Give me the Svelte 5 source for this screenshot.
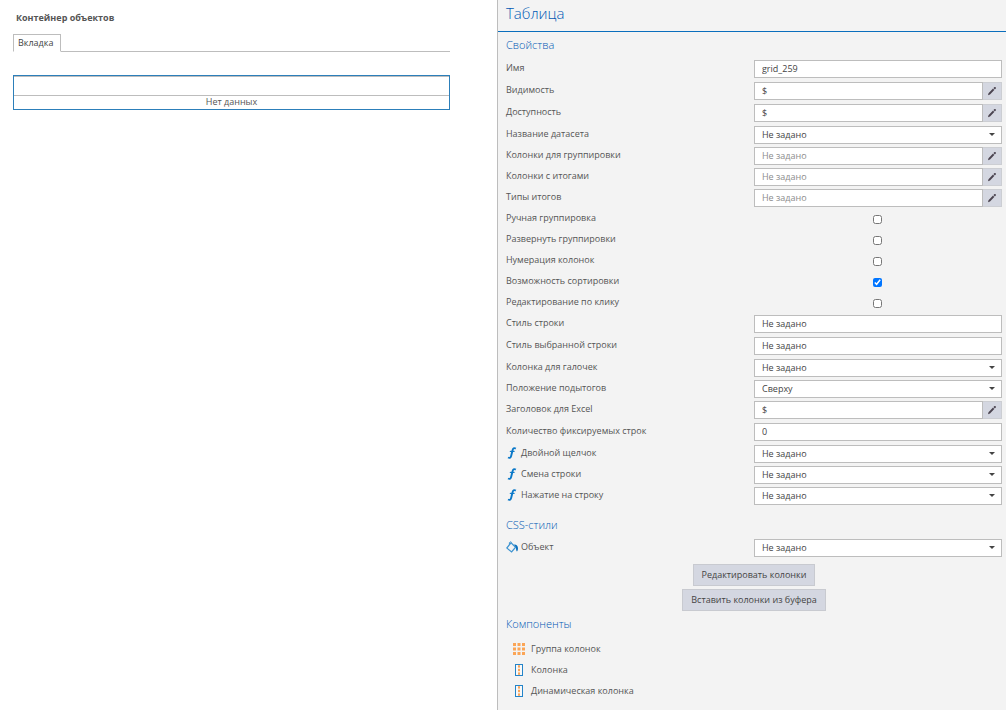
<script>
	// свойства выбранной таблицы
	// type определяет, какой элемент управления рисуется в строке
	let props = [
		{ id: 'name', label: 'Имя', type: 'text', value: 'grid_259' },
		{ id: 'visible', label: 'Видимость', type: 'edit', value: '$' },
		{ id: 'enabled', label: 'Доступность', type: 'edit', value: '$' },
		{ id: 'dataset', label: 'Название датасета', type: 'select', value: 'Не задано' },
		{ id: 'groups', label: 'Колонки для группировки', type: 'pick', value: '' },
		{ id: 'totals', label: 'Колонки с итогами', type: 'pick', value: '' },
		{ id: 'totalTypes', label: 'Типы итогов', type: 'pick', value: '' },
		{ id: 'manual', label: 'Ручная группировка', type: 'check', value: false },
		{ id: 'expand', label: 'Развернуть группировки', type: 'check', value: false },
		{ id: 'numbers', label: 'Нумерация колонок', type: 'check', value: false },
		{ id: 'sort', label: 'Возможность сортировки', type: 'check', value: true },
		{ id: 'clickEdit', label: 'Редактирование по клику', type: 'check', value: false },
		{ id: 'rowStyle', label: 'Стиль строки', type: 'text', value: 'Не задано' },
		{ id: 'selStyle', label: 'Стиль выбранной строки', type: 'text', value: 'Не задано' },
		{ id: 'checkCol', label: 'Колонка для галочек', type: 'select', value: 'Не задано' },
		{ id: 'subtotals', label: 'Положение подытогов', type: 'select', value: 'Сверху' },
		{ id: 'excel', label: 'Заголовок для Excel', type: 'edit', value: '$' },
		{ id: 'fixed', label: 'Количество фиксируемых строк', type: 'text', value: '0' },
		{ id: 'dblclick', label: 'Двойной щелчок', type: 'select', value: 'Не задано', icon: 'func' },
		{ id: 'rowChange', label: 'Смена строки', type: 'select', value: 'Не задано', icon: 'func' },
		{ id: 'rowClick', label: 'Нажатие на строку', type: 'select', value: 'Не задано', icon: 'func' }
	];

	let styles = [
		{ id: 'object', label: 'Объект', type: 'select', value: 'Не задано', icon: 'fill' }
	];

	let components = [
		{ label: 'Группа колонок', icon: 'grid' },
		{ label: 'Колонка', icon: 'column' },
		{ label: 'Динамическая колонка', icon: 'column' }
	];

	const dots = [0, 1, 2];
</script>

<!-- строка свойства: подпись слева, поле справа -->
{#snippet row(p)}
	<div class="row {p.type}">
		<label for={p.id}>
			{#if p.icon === 'func'}
				<svg class="icon" width="12" height="12" viewBox="0 0 12 12">
					<path d="M9.8 1.6C8 .5 7 1.3 6.5 3.5L5.2 8.8C4.8 10.7 3.8 11.4 2 10.5" fill="none" stroke="#0a78c8" stroke-width="1.9" />
					<path d="M3.8 4.4h4.8" stroke="#0a78c8" stroke-width="1.1" />
				</svg>
			{:else if p.icon === 'fill'}
				<svg class="icon" width="12" height="12" viewBox="0 0 12 12">
					<path d="M5 1.8L9.6 6.2 5.6 11 .8 7z" fill="none" stroke="#3d93d0" stroke-width="1.2" />
					<path d="M3.4 3.4V1.6Q4.4.2 5.6 1.4" fill="none" stroke="#3d93d0" />
					<path d="M8 3.4c2.4-.2 4 1.4 4 3.8 0 1.6-.4 2.6-1.1 3.2-.7-.8-.9-2-.9-4z" fill="#0a70bd" />
				</svg>
			{/if}
			<span>{p.label}</span>
		</label>
		<div class="control">
			{#if p.type === 'check'}
				<input id={p.id} type="checkbox" bind:checked={p.value} />
			{:else if p.type === 'select'}
				<select id={p.id} bind:value={p.value}>
					<option>{p.value}</option>
				</select>
				<svg class="caret" width="6" height="3" viewBox="0 0 6 3"><path d="M0 0h6L3 3z" fill="#444" /></svg>
			{:else}
				<input id={p.id} type="text" placeholder="Не задано" bind:value={p.value} />
				{#if p.type !== 'text'}
					<button class="pencil" aria-label="Изменить: {p.label}">
						<svg width="10" height="10" viewBox="0 0 10 10">
							<path d="M1 9.2l.5-2L6 2.6l1.3 1.3-4.3 4.6zM6.5 2.1l1-1q.4-.3.8 0l.5.5q.4.4 0 .8l-1 1z" fill="#4b4450" />
						</svg>
					</button>
				{/if}
			{/if}
		</div>
	</div>
{/snippet}

<div class="editor">
	<!-- предпросмотр формы -->
	<main class="preview">
		<h1>Контейнер объектов</h1>
		<div class="tabs">
			<button class="tab">Вкладка</button>
		</div>
		<table>
			<thead>
				<tr><th></th></tr>
			</thead>
			<tbody>
				<tr><td>Нет данных</td></tr>
			</tbody>
		</table>
	</main>

	<!-- панель свойств -->
	<aside class="panel">
		<h2>Таблица</h2>
		<div class="body">
			<h3>Свойства</h3>
			{#each props as p}
				{@render row(p)}
			{/each}

			<h3 class="next">CSS-стили</h3>
			{#each styles as p}
				{@render row(p)}
			{/each}

			<div class="actions">
				<button>Редактировать колонки</button>
				<button>Вставить колонки из буфера</button>
			</div>

			<h3>Компоненты</h3>
			<ul>
				{#each components as c}
					<li>
						<svg width="12" height="12" viewBox="0 0 12 12">
							{#if c.icon === 'grid'}
								{#each dots as y}
									{#each dots as x}
										<rect x={x * 4.5} y={y * 4.5} width="3" height="3" fill="#fba556" />
									{/each}
								{/each}
							{:else}
								<rect x="2.5" y=".5" width="7" height="11" fill="#f8f8f8" stroke="#2384c9" />
								{#each dots as y}
									<rect x="5" y={1.2 + y * 3.6} width="2" height="2.4" fill="#fba556" />
								{/each}
							{/if}
						</svg>
						<a href="#component">{c.label}</a>
					</li>
				{/each}
			</ul>
		</div>
	</aside>
</div>

<style>
	:global(body) {
		margin: 0;
		background: #fff;
	}

	.editor {
		display: flex;
		min-height: 100vh;
		font-family: 'Open Sans', 'Noto Sans', sans-serif;
		font-size: 9px;
		line-height: 12px;
		color: #555;
	}

	button, input, select {
		box-sizing: border-box;
		font: inherit;
		color: #444;
	}

	h1, h2, h3 {
		margin: 0;
	}

	.preview {
		flex: 1;
		min-width: 0;
		padding: 12px 47px 0 13px;
	}

	h1 {
		padding-left: 3px;
		font-size: 9px;
		font-weight: 700;
	}

	.tabs {
		display: flex;
		margin: 10px 0 23px;
		border-bottom: 1px solid #bdbdbd;
	}

	.tab {
		height: 18px;
		margin-bottom: -1px;
		padding: 0 7px 0 4px;
		border: 1px solid #bdbdbd;
		border-bottom-color: #fff;
		background: #fff;
	}

	table {
		width: 100%;
		border: 1px solid #2c7fba;
		border-spacing: 0;
	}

	th {
		height: 18px;
		padding: 0;
		border-top: 1px solid #bdbdbd;
		border-bottom: 1px solid #bdbdbd;
	}

	td {
		padding: 0 0 1px;
		height: 12px;
		text-align: center;
	}

	.panel {
		box-sizing: border-box;
		width: 50.6%;
		border-left: 1px solid #bdbdbd;
		background: #f3f3f3;
	}

	h2 {
		padding: 3px 8px 7px;
		border-bottom: 1px solid #0a6ebd;
		font-size: 15px;
		font-weight: 300;
		line-height: 21px;
		color: #0058b4;
	}

	.body {
		padding: 5px 4px 0 8px;
	}

	h3 {
		margin-bottom: 7px;
		font-size: 11px;
		font-weight: 300;
		line-height: 16px;
		color: #0058b4;
	}

	h3.next {
		margin-top: 9px;
		margin-bottom: 6px;
	}

	.row {
		display: grid;
		grid-template-columns: 1fr 1fr;
		height: 21px;
	}

	.row.text, .row.edit {
		height: 22px;
	}

	label {
		display: flex;
		align-items: center;
		gap: 3px;
		height: 16px;
	}

	.icon {
		flex: none;
	}

	.control {
		position: relative;
		display: flex;
		height: 18px;
	}

	.check .control {
		justify-content: center;
		align-items: center;
	}

	input[type='checkbox'] {
		width: 9px;
		height: 9px;
		margin: 0;
		accent-color: #0075ff;
	}

	input[type='text'], select {
		flex: 1;
		min-width: 0;
		padding: 0 7px;
		border: 1px solid #bdbdbd;
		border-radius: 0;
		background: #fff;
		appearance: none;
	}

	input::placeholder {
		color: #8c8c8c;
		opacity: 1;
	}

	.caret {
		position: absolute;
		right: 7px;
		top: 7px;
		pointer-events: none;
	}

	.pencil {
		display: flex;
		align-items: center;
		justify-content: center;
		width: 19px;
		padding: 0;
		border: 1px solid #ccced3;
		border-left: 0;
		background: #d4d7e1;
	}

	.actions {
		display: flex;
		flex-direction: column;
		align-items: center;
		gap: 3px;
		padding: 4px 0 5px;
	}

	.actions button {
		height: 22px;
		padding: 0 8px;
		border: 1px solid #c8cad0;
		background: #d4d7e1;
	}

	.actions + h3 {
		margin-bottom: 6px;
	}

	ul {
		margin: 0;
		padding: 0 0 0 7px;
		list-style: none;
	}

	li {
		display: flex;
		align-items: center;
		gap: 6px;
		height: 21px;
	}

	a {
		color: inherit;
		text-decoration: none;
	}
</style>
